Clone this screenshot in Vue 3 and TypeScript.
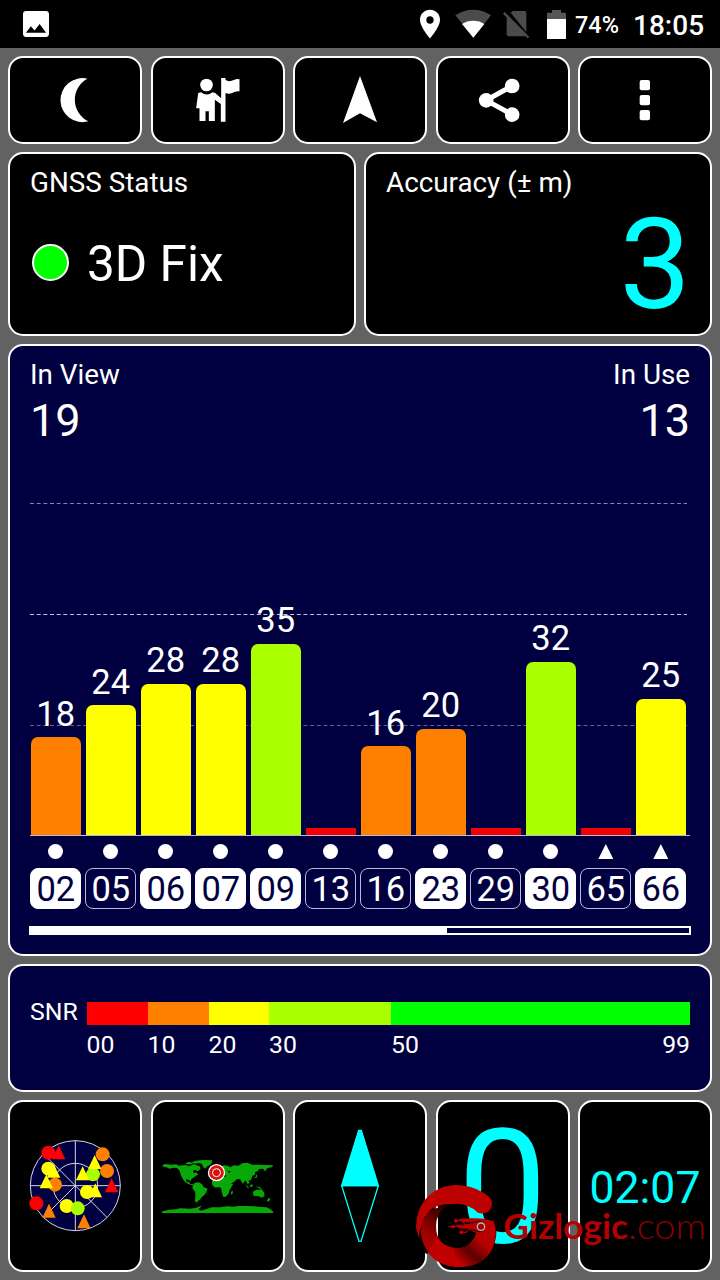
<script setup lang="ts">
interface Satellite {
  id: string
  snr: number
  height: number
  color: string
  used: boolean
  shape: 'circle' | 'triangle'
}

const RED = '#f00000'
const ORANGE = '#ff8000'
const YELLOW = '#ffff00'
const LIME = '#aaff00'

const satellites: Satellite[] = [
  { id: '02', snr: 18, height: 98, color: ORANGE, used: true, shape: 'circle' },
  { id: '05', snr: 24, height: 130, color: YELLOW, used: false, shape: 'circle' },
  { id: '06', snr: 28, height: 151.3, color: YELLOW, used: true, shape: 'circle' },
  { id: '07', snr: 28, height: 151.3, color: YELLOW, used: true, shape: 'circle' },
  { id: '09', snr: 35, height: 191.3, color: LIME, used: true, shape: 'circle' },
  { id: '13', snr: 0, height: 7.5, color: RED, used: false, shape: 'circle' },
  { id: '16', snr: 16, height: 88.7, color: ORANGE, used: false, shape: 'circle' },
  { id: '23', snr: 20, height: 106.3, color: ORANGE, used: true, shape: 'circle' },
  { id: '29', snr: 0, height: 7.5, color: RED, used: false, shape: 'circle' },
  { id: '30', snr: 32, height: 173.3, color: LIME, used: true, shape: 'circle' },
  { id: '65', snr: 0, height: 7.5, color: RED, used: false, shape: 'triangle' },
  { id: '66', snr: 25, height: 136.3, color: YELLOW, used: true, shape: 'triangle' },
]

const legend = [
  { label: '00', width: 61, color: '#ff0000' },
  { label: '10', width: 61, color: ORANGE },
  { label: '20', width: 60.5, color: YELLOW },
  { label: '30', width: 122, color: LIME },
  { label: '50', width: 299, color: '#00ff00' },
]

const sky: { x: number; y: number; c: string; t?: boolean }[] = [
  { x: 145, y: 173, c: '#ff0000' },
  { x: 176, y: 173, c: '#ff0000', t: true },
  { x: 308, y: 178, c: ORANGE },
  { x: 321, y: 228, c: ORANGE },
  { x: 279, y: 238, c: LIME },
  { x: 284, y: 202, c: YELLOW, t: true },
  { x: 248, y: 236, c: YELLOW, t: true },
  { x: 145, y: 221, c: YELLOW },
  { x: 161, y: 228, c: YELLOW, t: true },
  { x: 165, y: 269, c: ORANGE },
  { x: 139, y: 260, c: YELLOW, t: true },
  { x: 335, y: 272, c: '#ff0000', t: true },
  { x: 261, y: 291, c: YELLOW },
  { x: 286, y: 287, c: YELLOW, t: true },
  { x: 109, y: 325, c: '#ff0000' },
  { x: 200, y: 333, c: YELLOW },
  { x: 233, y: 340, c: LIME },
  { x: 147, y: 348, c: ORANGE, t: true },
  { x: 252, y: 380, c: ORANGE, t: true },
]

const triangle = (x: number, y: number): string =>
  `${x},${y - 22} ${x + 20},${y + 20} ${x - 20},${y + 20}`
</script>

<template>
  <div class="screen">
    <header class="status-bar">
      <svg class="photo" viewBox="3 3 18 18"><path fill="#fff" d="M21 19V5c0-1.1-.9-2-2-2H5c-1.1 0-2 .9-2 2v14c0 1.1.9 2 2 2h14c1.1 0 2-.9 2-2zM8.5 13.5l2.5 3.01L14.5 12l4.5 6H5l3.5-4.5z" /></svg>
      <div class="status-right">
        <svg width="140" height="30" viewBox="180 27 420 90" class="sys-icons">
          <path fill="#fff" fill-rule="evenodd" d="M210 29c-17 0-30 13-30 30 0 22 30 56 30 56s30-34 30-56c0-17-13-30-30-30zm0 42a11 11 0 1 1 0-22 11 11 0 0 1 0 22z" />
          <path fill="#4b4b4b" d="M340 112L286 46Q310 29 340 29T393 46Z" />
          <path fill="#fff" d="M340 113L306 72Q320 62 340 62T373 72Z" />
          <path fill="#4b4b4b" d="M452 38L458 33H493Q499 33 499 39V96ZM440 52L497 109H446Q440 109 440 103ZM429 41L434 36L508 110L503 115Z" />
        </svg>
        <svg width="19" height="29" viewBox="561 29 57 87" class="battery"><path fill="#565656" d="M561 37H576V29H603V37H618V57H561Z" /><path fill="#fff" d="M561 56H618V116H561Z" /></svg>
        <span class="percent">74%</span>
        <span class="clock">18:05</span>
      </div>
    </header>

    <main class="body">
      <nav class="row tools">
        <button class="card"><svg viewBox="30 174 390 252"><path fill="#fff" d="M262 236A66 66 0 1 0 265 364A72 72 0 0 1 262 236Z" /></svg></button>
        <button class="card">
          <svg viewBox="457.5 174 390 252" fill="#fff">
            <circle cx="618" cy="255" r="19" />
            <path d="M593 279L602 277Q618 290 636 277L644 279L662 295V234H675V240Q686 247 700 240Q709 236 717 238V274Q704 273 695 279Q684 284 675 279V365H661V312L643 299V363H625V334H615V363H597V325H587Z" />
          </svg>
        </button>
        <button class="card"><svg viewBox="885 174 390 252"><path fill="#fff" d="M1080 228L1131 367L1080 340L1029 369Z" /></svg></button>
        <button class="card">
          <svg viewBox="233.5 174 390 252" fill="#fff">
            <path d="M456 258L378 301L456 344" fill="none" stroke="#fff" stroke-width="15" />
            <circle cx="456" cy="258" r="22" /><circle cx="378" cy="301" r="22" /><circle cx="456" cy="344" r="22" />
          </svg>
        </button>
        <button class="card">
          <svg viewBox="660 174 390 252" fill="#fff">
            <rect x="839" y="240" width="31" height="31" rx="6" /><rect x="839" y="285" width="31" height="31" rx="6" /><rect x="839" y="330" width="31" height="31" rx="6" />
          </svg>
        </button>
      </nav>

      <section class="row readings">
        <div class="card reading">
          <div class="title">GNSS Status</div>
          <div class="fix"><i class="lamp"></i><span>3D Fix</span></div>
        </div>
        <div class="card reading">
          <div class="title">Accuracy (± m)</div>
          <div class="accuracy">3</div>
        </div>
      </section>

      <section class="card chart">
        <div class="counts">
          <div><div class="title">In View</div><div class="count">19</div></div>
          <div class="right"><div class="title">In Use</div><div class="count">13</div></div>
        </div>
        <div class="plot">
          <svg class="grid" viewBox="0 0 660 385" fill="none" stroke="#a9a9cc" stroke-dasharray="4 2.67">
            <path d="M0 52.5H657" stroke="#8585a8" />
            <path d="M0 163.5H657" stroke="#c4c4dc" />
            <path d="M0 274.5H657" stroke="#62628c" />
          </svg>
          <div v-for="s in satellites" :key="s.id" class="column">
            <span v-if="s.snr" class="value">{{ s.snr }}</span>
            <div class="bar" :class="{ flat: !s.snr }" :style="{ height: s.height + 'px', background: s.color }"></div>
          </div>
        </div>
        <div class="sats">
          <div v-for="s in satellites" :key="s.id" class="sat">
            <i :class="s.shape"></i>
            <span class="badge" :class="{ used: s.used }">{{ s.id }}</span>
          </div>
        </div>
        <div class="scroll"><div class="thumb"></div></div>
      </section>

      <section class="card snr">
        <div class="snr-label">SNR</div>
        <div class="scale">
          <div v-for="l in legend" :key="l.label" class="segment" :style="{ width: l.width + 'px' }">
            <div class="swatch" :style="{ background: l.color }"></div>
            <div class="ticks"><span>{{ l.label }}</span><span v-if="l.label === '50'">99</span></div>
          </div>
        </div>
      </section>

      <section class="row bottom">
        <div class="card">
          <svg viewBox="30 21 390 504">
            <circle cx="226" cy="272" r="135" fill="#000040" />
            <g fill="none" stroke="#d4d4ea" stroke-width="3">
              <circle cx="226" cy="272" r="135" /><circle cx="226" cy="272" r="67" />
              <path d="M91 272H361M226 137V407M131 177L321 367M226 272L131 367" />
            </g>
            <template v-for="(p, i) in sky" :key="i">
              <polygon v-if="p.t" :points="triangle(p.x, p.y)" :fill="p.c" />
              <circle v-else :cx="p.x" :cy="p.y" r="21" :fill="p.c" />
            </template>
          </svg>
        </div>
        <div class="card">
          <svg viewBox="23.5 21 390 504">
            <g fill="#08a808">
              <path d="M51 210L62 207L78 209L94 208L101 212L120 210L133 214L146 207L155 211L164 214L166 222L158 229L151 225L143 227L147 235L153 231L159 239L151 243L145 248L138 253L136 260L131 254L122 253L124 261L131 260L136 267L145 268L142 271L132 268L120 262L111 249L107 240L104 228L95 219L84 218L73 221L64 217L55 216Z" />
              <path d="M139 202L152 197L174 195L202 196L198 208L187 213L180 221L174 216L170 206L158 204L151 206ZM120 204L132 201L145 204L138 208L126 208ZM205 219L212 218L211 222L205 222Z" />
              <path d="M149 263L161 262L171 268L174 275L187 281L184 291L177 301L170 306L164 314L158 318L155 324L149 318L151 303L150 291L142 280L143 271Z" />
              <path d="M207 252L204 244L213 241L213 233L224 229L226 220L236 211L247 212L255 217L266 211L280 212L291 205L306 203L321 209L343 209L361 210L383 211L382 216L366 220L360 229L353 221L342 222L337 229L330 231L329 240L321 242L320 250L315 257L310 256L313 265L307 267L302 257L299 258L293 267L285 253L276 252L266 261L257 266L264 267L257 279L252 288L250 296L241 306L234 305L230 292L228 280L223 276L210 278L201 270L200 260Z" />
              <path d="M257 291L264 287L262 297L258 299ZM300 268L309 275L313 280L307 278ZM314 270L323 268L321 276L315 275ZM332 274L345 277L350 283L341 280ZM323 290L334 284L343 284L349 282L357 293L358 303L349 308L340 303L328 304L324 299ZM370 308L376 313L370 320L365 317ZM326 249L332 245L334 238L337 241L334 249Z" />
              <path d="M51 349L74 344L92 343L104 340L134 341L151 339L161 335L169 331L165 338L160 343L168 347L184 342L200 337L226 337L247 334L266 335L279 333L300 333L326 334L347 336L364 337L376 343L384 350V354H51Z" />
            </g>
            <path d="M212 235L224 235L233 240L243 241L241 245L228 246L216 242ZM247 227L256 229L253 234Z" fill="#000" />
            <circle cx="214" cy="233" r="26" fill="#fff" /><circle cx="214" cy="233" r="22" fill="#d81414" />
            <circle cx="214" cy="233" r="12" fill="#e00c0c" stroke="#fff" stroke-width="3" />
          </svg>
        </div>
        <div class="card">
          <svg viewBox="15 21 390 504" stroke="#00ffff" stroke-width="4">
            <path d="M206 106H214L265 272H155Z" fill="#00ffff" /><path d="M155 272L207 439H213L265 272Z" fill="none" />
          </svg>
        </div>
        <div class="card zero">0</div>
        <div class="card timer">02:07</div>
      </section>
    </main>

    <svg class="watermark" viewBox="378 255 882 270">
      <defs>
        <linearGradient id="shade" x1="0" y1=".9" x2=".75" y2=".15"><stop offset="0" stop-color="#c00000" /><stop offset=".35" stop-color="#a00000" /><stop offset=".8" stop-color="#2a0000" /></linearGradient>
        <linearGradient id="tail" x1=".2" y1="1" x2=".9" y2=".1"><stop offset="0" stop-color="#c90000" /><stop offset=".3" stop-color="#5c0000" /><stop offset=".6" stop-color="#b40000" /><stop offset="1" stop-color="#c00000" /></linearGradient>
      </defs>
      <path d="M438 336L405 362L389 410L386 430L378 394L400 340Z" fill="#c00000" />
      <path d="M436 334Q402 354 393 397Q385 440 408 477L422 472L420 390Z" fill="#080000" />
      <path d="M434 341Q454 333 474 332Q438 352 438 393Q438 456 500 460Q544 460 559 414L612 374Q625 411 614 443Q592 510 516 516Q450 519 416 475Q378 420 403 366Q413 350 434 341Z" fill="url(#shade)" />
      <path d="M500 515Q450 515 418 477L438 420Q456 456 500 460Q530 460 545 440L575 495Q545 515 500 515Z" fill="#c00000" />
      <path d="M506 371Q565 367 594 374L611 379Q622 412 614 441Q601 492 554 508Q530 516 500 515L493 460Q540 464 559 414Q545 410 536 401H509L497 389H540V384H518Z" fill="url(#tail)" />
      <path d="M382 416Q370 360 405 314Q449 264 514 271Q566 277 600 308Q613 325 599 346Q584 360 564 353Q532 323 486 327Q429 326 400 363Q388 380 382 416Z" fill="#bd0000" />
      <g fill="none" stroke="#b00000" stroke-width="4">
        <path d="M475 395H558M499 377H514L526 389H548M514 412H528L540 400" />
        <path d="M520 383H551Q563 376 576 380M520 405H551Q562 413 577 408" stroke="#3a0000" stroke-width="3" />
        <circle cx="573" cy="395" r="11" fill="#a80000" stroke="#9fc0c4" />
      </g>
      <g fill="#c00000"><circle cx="498" cy="377" r="6" /><circle cx="490" cy="395" r="5" /><circle cx="514" cy="412" r="6" /></g>
      <text x="640" y="431" class="brand" textLength="374" lengthAdjust="spacingAndGlyphs">Gizlogic</text>
      <text x="1014" y="431" class="domain" textLength="234" lengthAdjust="spacingAndGlyphs">.com</text>
    </svg>
  </div>
</template>

<style>
body { margin: 0; background: #626262; }
</style>

<style scoped>
.screen { position: relative; width: 720px; height: 1280px; overflow: hidden; background: #626262; color: #fff; font-family: Roboto, "Liberation Sans", sans-serif; }
.status-bar { display: flex; height: 48px; background: #000; justify-content: space-between; box-sizing: border-box; padding: 0 16px 0 23px; }
.photo { width: 26px; height: 26px; margin-top: 11px; }
.status-right { display: flex; align-items: flex-start; font-weight: 500; white-space: nowrap; }
.sys-icons { margin-top: 9px; margin-right: -13px; }
.battery { margin-top: 10px; }
.percent { width: 50px; margin-left: 9px; font-size: 23.5px; line-height: 51px; }
.clock { width: 71px; margin-left: 8px; font-size: 28px; line-height: 51px; }
.body { display: flex; flex-direction: column; gap: 8px; padding: 8px; }
.row { display: flex; gap: 8.5px; }
.card { box-sizing: border-box; flex: 1 1 0; min-width: 0; padding: 0; border: 2px solid #fff; border-radius: 15px; background: #000; }
.card > svg { display: block; width: 100%; height: 100%; }
.tools { height: 88px; }
.readings { height: 184px; gap: 8px; }
.reading { padding: 13px 20px 0; }
.title { font-size: 27.8px; line-height: 32px; white-space: nowrap; }
.fix { display: flex; align-items: center; gap: 18px; margin-top: 35px; padding-left: 2px; font-size: 49.5px; line-height: 60px; }
.lamp { box-sizing: border-box; width: 37px; height: 37px; margin-top: -3px; border: 2px solid #fff; border-radius: 50%; background: #00ff00; }
.accuracy { margin: -9px -1px 0 0; text-align: right; color: #00ffff; font-size: 127px; line-height: 150px; }
.chart { flex: none; height: 612px; padding: 13px 20px 0; background: #000040; }
.counts { display: flex; justify-content: space-between; height: 92px; }
.count { font-size: 45px; line-height: 60px; }
.right { text-align: right; }
.plot { position: relative; display: flex; gap: 5px; align-items: flex-end; box-sizing: border-box; width: 660px; height: 385px; padding-left: .7px; border-bottom: 1px solid #b8b8dc; }
.grid { position: absolute; left: 0; top: 0; width: 660px; height: 385px; }
.column { position: relative; width: 50px; text-align: center; }
.value { display: block; margin-bottom: 11.5px; font-size: 34.5px; line-height: 24px; }
.bar { border-radius: 7px 7px 0 0; }
.bar.flat { border-radius: 0; }
.sats { display: flex; gap: 4px; margin-top: 8px; padding-left: .3px; }
.sat { display: flex; flex: none; width: 51px; flex-direction: column; align-items: center; }
.circle { width: 15px; height: 15px; border-radius: 50%; background: #fff; }
.triangle { width: 15px; height: 15px; background: #fff; clip-path: polygon(50% 0, 100% 100%, 0 100%); }
.badge { box-sizing: border-box; width: 51px; height: 41px; margin-top: 9px; border: 1px solid #b9b9dc; border-radius: 8px; text-align: center; font-size: 34.5px; line-height: 41px; }
.badge.used { border-color: #fff; background: #fff; color: #000040; }
.scroll { box-sizing: border-box; width: 662px; height: 9px; margin: 17px 0 0 -1px; border: 2px solid #fff; }
.thumb { width: 416px; height: 100%; background: #fff; }
.snr { flex: none; display: flex; height: 128px; padding: 36px 20px 0; background: #000040; font-size: 24.8px; }
.snr-label { width: 57px; line-height: 20px; }
.scale { display: flex; }
.swatch { height: 23px; }
.ticks { display: flex; justify-content: space-between; line-height: 40px; }
.bottom { height: 172px; }
.zero { display: flex; align-items: center; justify-content: center; padding-top: 4px; color: #00ffff; font-size: 159px; line-height: 188px; }
.timer { display: flex; justify-content: center; color: #00ffff; font-size: 44.5px; line-height: 172px; }
.watermark { position: absolute; left: 416px; top: 1180px; width: 294px; height: 90px; }
.brand { fill: #b40000; font: 700 102px Lato, sans-serif; }
.domain { fill: #8c0000; font: 300 106px Lato, sans-serif; }
</style>
